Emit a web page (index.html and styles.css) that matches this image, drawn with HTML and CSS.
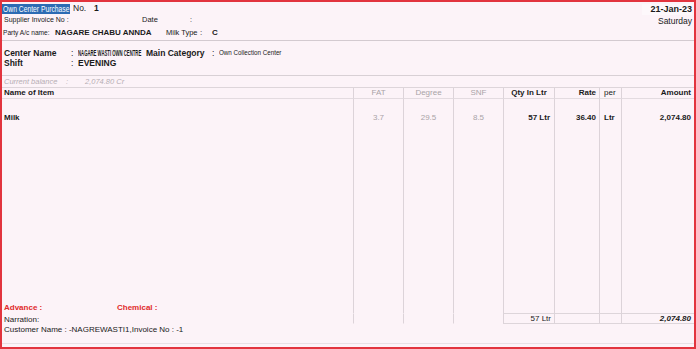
FILE: index.html
```html
<!DOCTYPE html>
<html lang="en">

<head>
    <meta charset="UTF-8">
    <meta name="viewport" content="width=device-width, initial-scale=1.0">
    <title>Own Center Purchase</title>
    <link rel="stylesheet" href="styles.css">
</head>

<body>
    <div class="voucher">
        <!-- Voucher header -->
        <div class="head">
            <div class="head-left">
                <div class="row r1">
                    <span class="tag"><span class="squeeze">Own Center Purchase</span></span>
                    <span class="no-label">No.</span>
                    <b>1</b>
                </div>
                <div class="row r2">
                    <span class="small sup">Supplier Invoice No :</span>
                    <span class="small date-label">Date</span>
                    <span class="small">:</span>
                </div>
                <div class="row r3">
                    <span class="small party">Party A/c name:</span>
                    <b class="party-name">NAGARE CHABU ANNDA</b>
                    <span class="milk-label">Milk Type</span>
                    <span class="milk-colon">:</span>
                    <b>C</b>
                </div>
            </div>
            <div class="head-right">
                <b class="date">21-Jan-23</b>
                <span class="day">Saturday</span>
            </div>
        </div>

        <div class="center">
            <div class="row">
                <b class="c-label">Center Name</b>
                <span class="c-colon">:</span>
                <span class="c-value"><b class="squeeze tight">NAGARE WASTI OWN CENTRE</b></span>
                <b class="c-label2">Main Category</b>
                <span class="c-colon">:</span>
                <span class="c-value2"><span class="squeeze soft">Own Collection Center</span></span>
            </div>
            <div class="row">
                <b class="c-label">Shift</b>
                <span class="c-colon">:</span>
                <b>EVENING</b>
            </div>
        </div>

        <div class="balance">
            <span class="b-label">Current balance</span>
            <span class="b-colon">:</span>
            <span>2,074.80 Cr</span>
        </div>

        <!-- Items table -->
        <div class="items">
            <div class="cell hd name"><b>Name of Item</b></div>
            <div class="cell hd col mid grey">FAT</div>
            <div class="cell hd col mid grey">Degree</div>
            <div class="cell hd col mid grey">SNF</div>
            <div class="cell hd col mid"><b>Qty In Ltr</b></div>
            <div class="cell hd col num"><b>Rate</b></div>
            <div class="cell hd col per">per</div>
            <div class="cell hd col num"><b>Amount</b></div>

            <div class="cell bd name first">
                <b>Milk</b>
                <div class="extras">
                    <b class="advance">Advance :</b>
                    <b>Chemical :</b>
                </div>
            </div>
            <div class="cell bd col mid grey">3.7</div>
            <div class="cell bd col mid grey">29.5</div>
            <div class="cell bd col mid grey">8.5</div>
            <div class="cell bd col num qty"><b>57 Ltr</b></div>
            <div class="cell bd col num"><b>36.40</b></div>
            <div class="cell bd col per"><b>Ltr</b></div>
            <div class="cell bd col num"><b>2,074.80</b></div>

            <div class="cell tt name">Narration:</div>
            <div class="cell tt col"></div>
            <div class="cell tt col"></div>
            <div class="cell tt col"></div>
            <div class="cell tt col sum num qty-total">57 Ltr</div>
            <div class="cell tt col sum"></div>
            <div class="cell tt col sum"></div>
            <div class="cell tt col sum num"><b><i>2,074.80</i></b></div>
        </div>

        <div class="customer">Customer Name : -NAGREWASTI1,Invoice No : -1</div>
        <div class="footer-line"></div>
    </div>
</body>

</html>
```

FILE: styles.css
```css
* {
    box-sizing: border-box;
}

body {
    margin: 0;
    padding: 0;
    font-family: 'Liberation Sans', Arial, sans-serif;
    font-size: 8px;
    line-height: 10px;
    color: #1a1a1a;
    background: #fcf3f8;
    overflow: hidden;
}

.voucher {
    width: 696px;
    height: 349px;
    border: 2px solid #e2343e;
    display: flex;
    flex-direction: column;
    background: #fcf3f8;
}

.row {
    display: flex;
    align-items: center;
    white-space: nowrap;
}

.small {
    font-size: 7px;
}

.squeeze {
    display: inline-block;
    white-space: nowrap;
    transform-origin: left center;
}

/* header */
.head {
    height: 39px;
    display: flex;
    justify-content: space-between;
    border-bottom: 1px solid #d3cad0;
}

.r1 {
    height: 12px;
}

.r2 {
    height: 11px;
}

.r3 {
    height: 15px;
}

.tag {
    width: 68px;
    height: 10px;
    margin-top: 1px;
    background: #2c6bb3;
    color: #fff;
    overflow: hidden;
    padding-left: 1px;
}

.tag .squeeze {
    font-size: 9px;
    line-height: 10px;
    transform: scaleX(0.75);
}

.no-label {
    width: 21px;
    margin-left: 3px;
    font-size: 8.5px;
}

.r1 b {
    font-size: 8.5px;
}

.sup {
    width: 138px;
    margin-left: 2px;
}

.date-label {
    width: 48px;
    font-size: 7.5px;
}

.party {
    width: 52px;
    margin-left: 1px;
    font-size: 6.6px;
}

.party-name {
    width: 111px;
}

.milk-label {
    width: 34px;
    font-size: 7.5px;
}

.milk-colon {
    width: 12px;
}

.head-right {
    display: flex;
    flex-direction: column;
    align-items: flex-end;
    padding: 2px 2px 0 0;
}

.date {
    font-size: 9px;
    line-height: 11px;
    padding-left: 8px;
    background: #fdf8fb;
}

.day {
    font-size: 8.5px;
    line-height: 12px;
}

/* center details */
.center {
    height: 35px;
    padding-top: 6px;
    border-bottom: 1px solid #d8d0d5;
}

.center b,
.center span {
    font-size: 8.5px;
}

.c-label {
    width: 67px;
    margin-left: 2px;
}

.c-colon {
    width: 7px;
}

.c-value {
    width: 68px;
    overflow: hidden;
}

.tight {
    transform: scaleX(0.5);
}

.c-label2 {
    width: 66px;
}

.soft {
    font-size: 8px !important;
    transform: scaleX(0.78);
}

.balance {
    height: 12px;
    display: flex;
    align-items: center;
    padding-left: 2px;
    font-style: italic;
    font-size: 7.5px;
    color: #b6aeb4;
    border-bottom: 1px solid #ddd5da;
}

.b-label {
    width: 62px;
}

.b-colon {
    width: 19px;
}

/* items table */
.items {
    display: grid;
    grid-template-columns: 351px 50px 50px 50px 51px 45px 22px 1fr;
    grid-template-rows: 11px 214px 11px;
}

.cell {
    white-space: nowrap;
}

.col {
    border-left: 1px solid #dcd3d9;
}

.hd {
    border-bottom: 1px solid #e3dbe0;
}

.bd {
    padding-top: 14px;
}

.name {
    padding-left: 2px;
}

.first {
    display: flex;
    flex-direction: column;
    justify-content: space-between;
    padding-top: 14px;
}

.extras {
    display: flex;
    color: #e02a2a;
}

.advance {
    width: 113px;
}

.mid {
    text-align: center;
}

.num {
    text-align: right;
    padding-right: 3px;
}

.qty {
    padding-right: 4px;
}

.per {
    padding-left: 4px;
}

.grey {
    color: #a9a3a7;
}

.tt {
    line-height: 9px;
    border-top: 1px solid transparent;
    border-bottom: 1px solid transparent;
}

.tt.name {
    padding-top: 1px;
}

.sum {
    border-top-color: #ddd5da;
    border-bottom-color: #ddd5da;
}

.qty-total {
    padding-right: 3px;
}

.customer {
    height: 11px;
    line-height: 12px;
    padding-left: 2px;
}

.footer-line {
    margin-top: 8px;
    border-top: 1px solid #e8e0e5;
}
```
